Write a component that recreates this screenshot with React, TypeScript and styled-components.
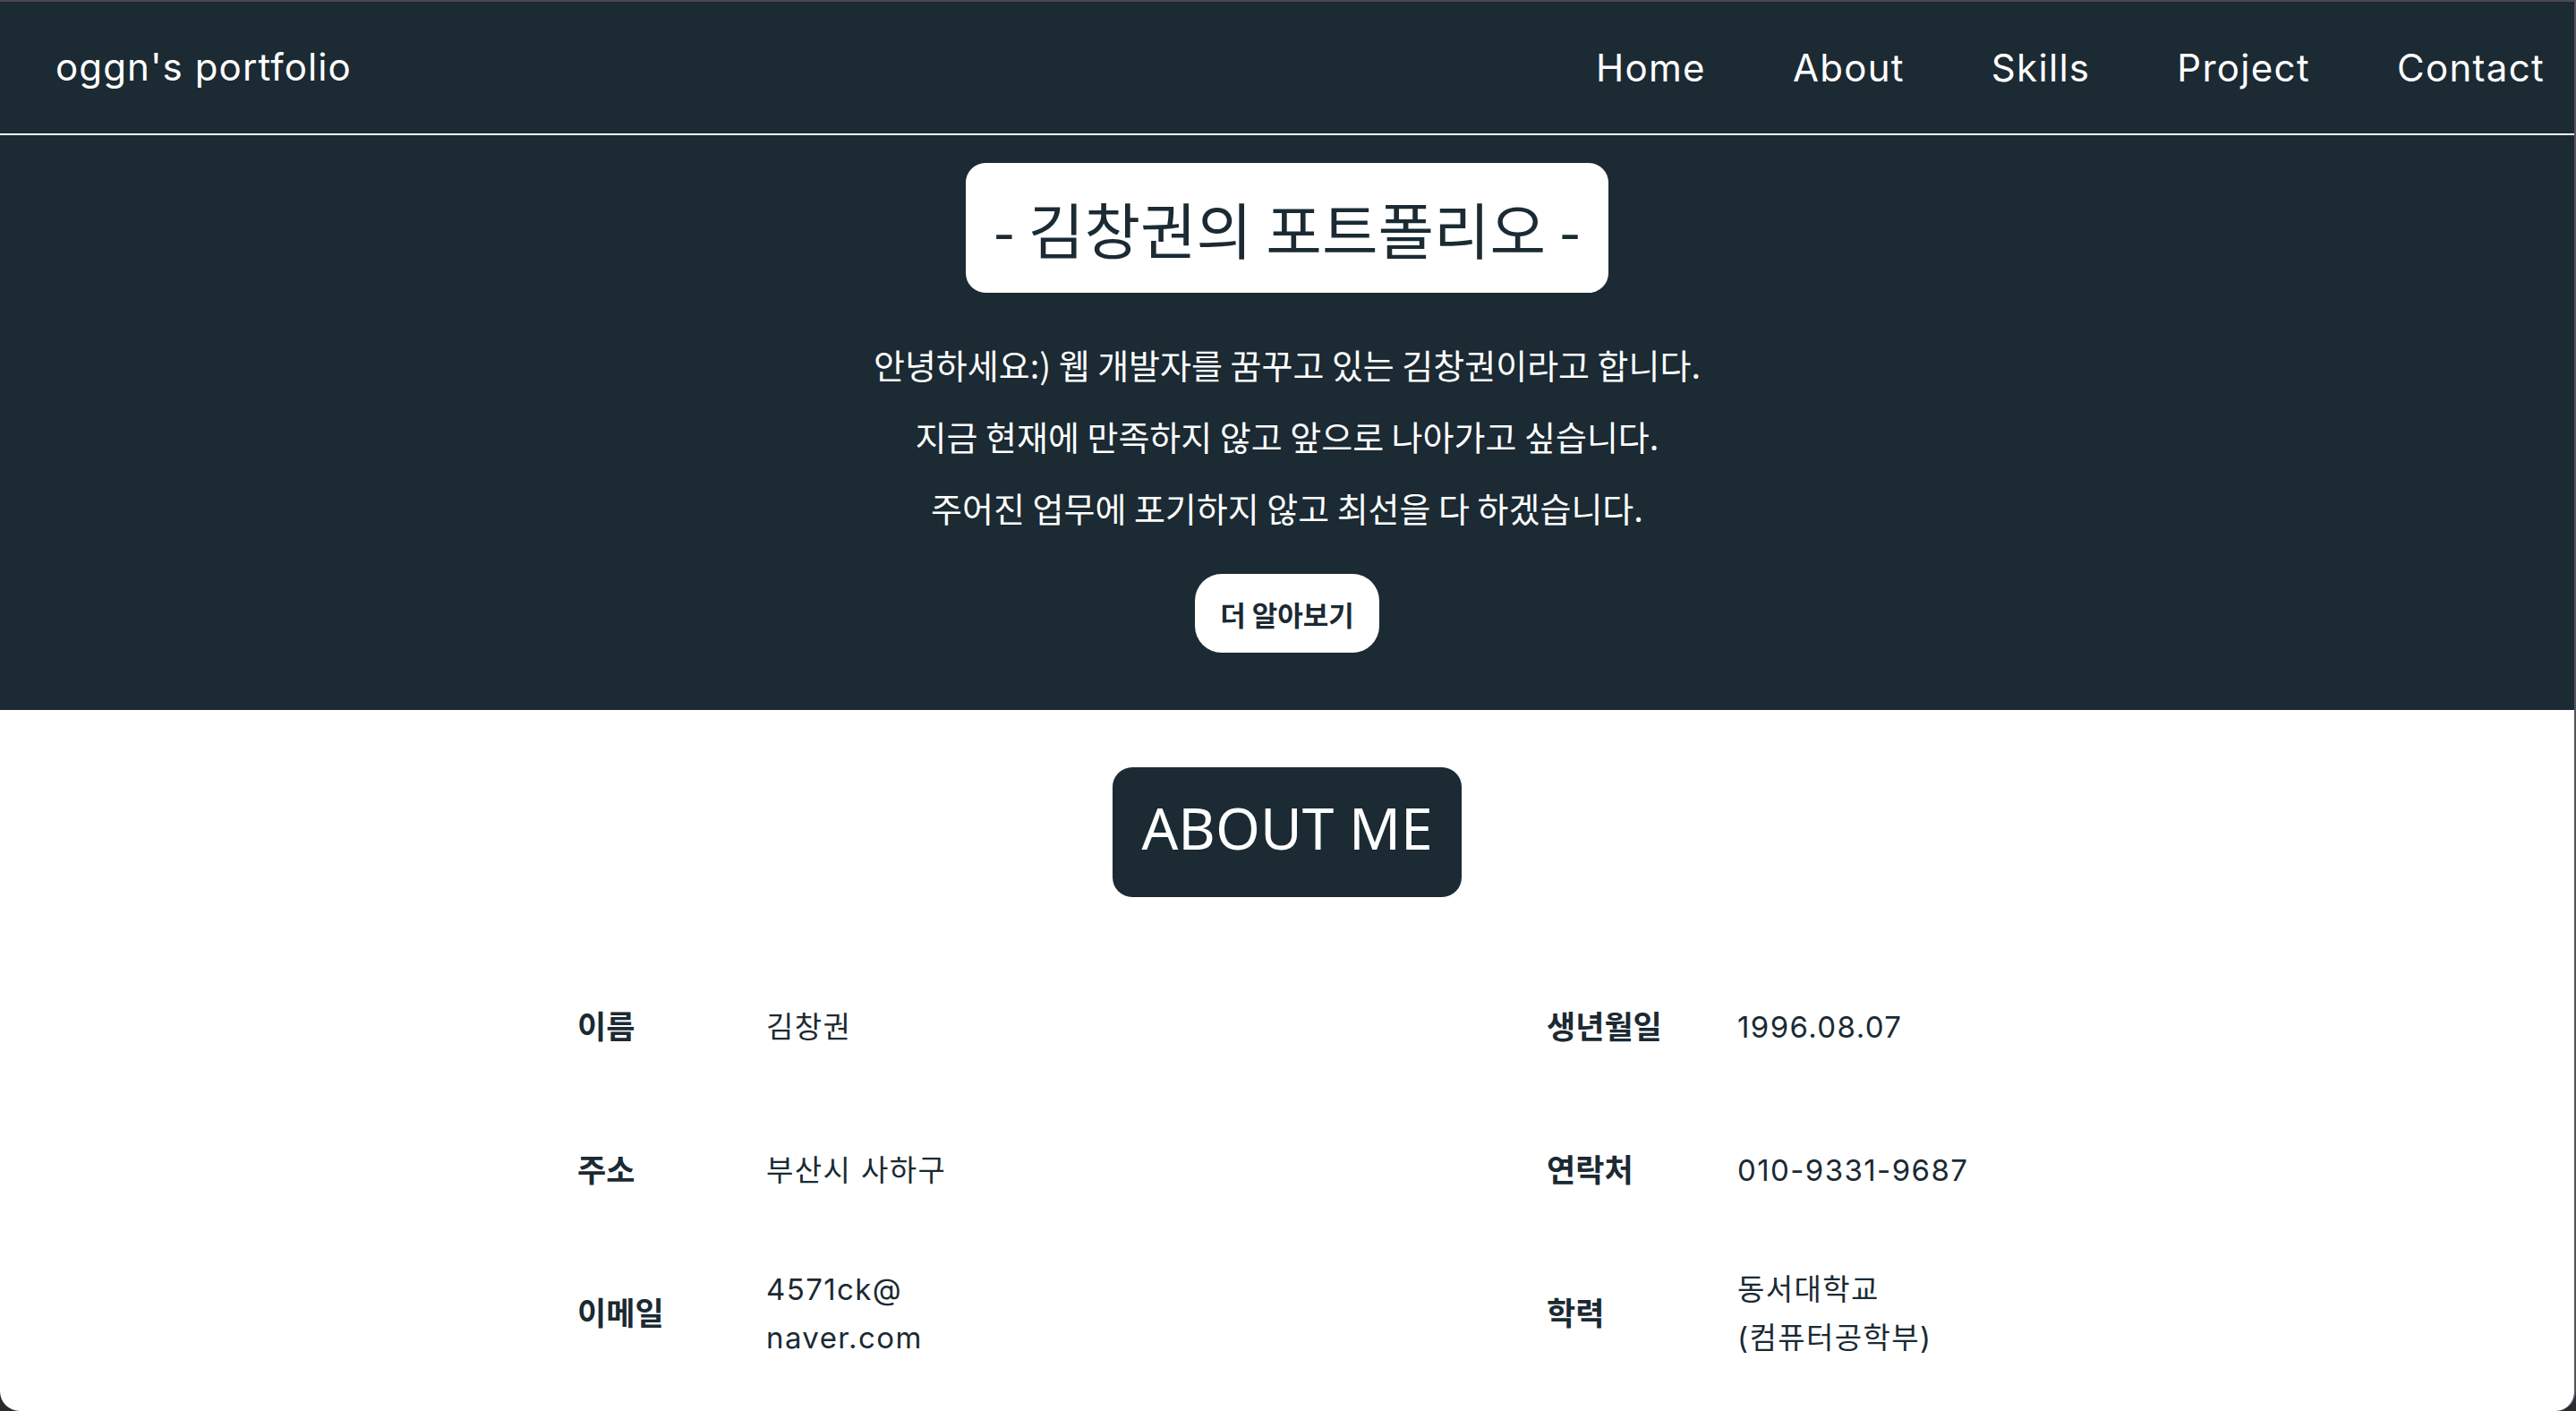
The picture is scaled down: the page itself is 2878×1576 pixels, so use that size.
import React from "react";
import styled, { createGlobalStyle } from "styled-components";

// Constants
const DARK = "#1b2a33";
const NAV_ITEMS: Array<string> = ["Home", "About", "Skills", "Project", "Contact"];

const INTRO_LINES: Array<string> = [
  "안녕하세요:) 웹 개발자를 꿈꾸고 있는 김창권이라고 합니다.",
  "지금 현재에 만족하지 않고 앞으로 나아가고 싶습니다.",
  "주어진 업무에 포기하지 않고 최선을 다 하겠습니다.",
];

interface InfoItem {
  label: string;
  value: React.ReactNode;
}

const INFO: Array<InfoItem> = [
  { label: "이름", value: "김창권" },
  { label: "생년월일", value: "1996.08.07" },
  { label: "주소", value: "부산시 사하구" },
  { label: "연락처", value: "010-9331-9687" },
  { label: "이메일", value: <>4571ck@<br />naver.com</> },
  { label: "학력", value: <>동서대학교<br />(컴퓨터공학부)</> },
];

const GlobalStyle = createGlobalStyle`
  html, body {
    margin: 0;
    padding: 0;
    background: #2b2a31;
  }
  body {
    font-family: Inter, "Noto Sans CJK KR", sans-serif;
    overflow: hidden;
  }
  * {
    box-sizing: border-box;
  }
`;

// Styled Components
const Window = styled.div`
  width: 2878px;
  height: 1576px;
  overflow: hidden;
  background: #fff;
  border-top: 2px solid #4a4950;
  border-right: 2px solid #55545a;
  border-radius: 0 0 22px 22px;
`;

const Header = styled.header`
  display: flex;
  align-items: center;
  justify-content: space-between;
  height: 149px;
  padding: 0 33px 0 62px;
  background: ${DARK};
  border-bottom: 2px solid #fff;
  color: #fff;
  font-family: Inter, sans-serif;
  font-size: 42px;
`;

const Logo = styled.div`
  letter-spacing: 1.1px;
  margin-top: -2px;
`;

const Nav = styled.nav`
  display: flex;
  gap: 97px;
`;

const NavLink = styled.a`
  color: #fff;
  text-decoration: none;
  letter-spacing: 1.3px;
`;

const Hero = styled.section`
  display: flex;
  flex-direction: column;
  align-items: center;
  padding: 31px 0 64px;
  background: ${DARK};
  color: #fff;
`;

const TitleBox = styled.h1<{ $inverse?: boolean }>`
  margin: 0;
  display: flex;
  align-items: center;
  justify-content: center;
  height: 145px;
  border-radius: 22px;
  background: ${(p) => (p.$inverse ? DARK : "#fff")};
  color: ${(p) => (p.$inverse ? "#fff" : DARK)};
  font-family: ${(p) => (p.$inverse ? "\"Noto Sans\", sans-serif" : "\"Noto Sans CJK KR\", sans-serif")};
  font-size: ${(p) => (p.$inverse ? "64px" : "68px")};
  font-weight: 400;
  padding: ${(p) => (p.$inverse ? "0 32px 10px" : "0 31px")};
`;

const Intro = styled.div`
  margin-top: 40px;
  text-align: center;
  font-family: "Noto Sans CJK KR", sans-serif;
  font-size: 38px;
  line-height: 80px;
`;

const MoreButton = styled.button`
  margin-top: 34px;
  width: 206px;
  height: 88px;
  border: none;
  border-radius: 30px;
  background: #fff;
  color: ${DARK};
  font-family: "Noto Sans CJK KR", sans-serif;
  font-size: 31px;
  font-weight: 700;
  cursor: pointer;
`;

const About = styled.section`
  display: flex;
  flex-direction: column;
  align-items: center;
  padding-top: 64px;
  color: ${DARK};
`;

const InfoGrid = styled.div`
  display: grid;
  grid-template-columns: 211px 872px 213px 290px;
  grid-auto-rows: 160px;
  margin-top: 62px;
  width: 1586px;
`;

const Label = styled.div`
  display: flex;
  align-items: center;
  font-family: "Noto Sans CJK KR", sans-serif;
  font-size: 35px;
  font-weight: 700;
`;

const Value = styled.div`
  display: flex;
  align-items: center;
  padding-top: 5px;
  font-family: Inter, "Noto Sans CJK KR", sans-serif;
  font-size: 33px;
  letter-spacing: 1.4px;
  line-height: 54px;
`;

const App: React.FC = () => {
  return (
    <>
      <GlobalStyle />
      <Window>
        <Header>
          <Logo>oggn's portfolio</Logo>
          <Nav>
            {NAV_ITEMS.map((item: string, i: number) => (
              <NavLink key={i} href={`#${item.toLowerCase()}`}>{item}</NavLink>
            ))}
          </Nav>
        </Header>

        <Hero>
          <TitleBox>- 김창권의 포트폴리오 -</TitleBox>
          <Intro>
            {INTRO_LINES.map((line: string, i: number) => (
              <div key={i}>{line}</div>
            ))}
          </Intro>
          <MoreButton>더 알아보기</MoreButton>
        </Hero>

        <About>
          <TitleBox $inverse>ABOUT ME</TitleBox>
          <InfoGrid>
            {INFO.map((item: InfoItem, i: number) => (
              <React.Fragment key={i}>
                <Label>{item.label}</Label>
                <Value>{item.value}</Value>
              </React.Fragment>
            ))}
          </InfoGrid>
        </About>
      </Window>
    </>
  );
};

export default App;
